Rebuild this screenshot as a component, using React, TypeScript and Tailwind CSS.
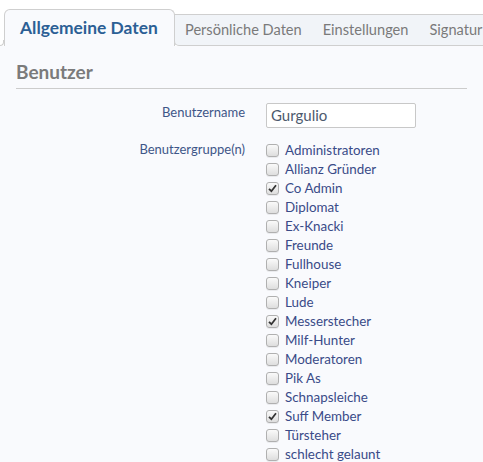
import React from "react";

const groups: { name: string; checked: boolean }[] = [
  { name: "Administratoren", checked: false },
  { name: "Allianz Gründer", checked: false },
  { name: "Co Admin", checked: true },
  { name: "Diplomat", checked: false },
  { name: "Ex-Knacki", checked: false },
  { name: "Freunde", checked: false },
  { name: "Fullhouse", checked: false },
  { name: "Kneiper", checked: false },
  { name: "Lude", checked: false },
  { name: "Messerstecher", checked: true },
  { name: "Milf-Hunter", checked: false },
  { name: "Moderatoren", checked: false },
  { name: "Pik As", checked: false },
  { name: "Schnapsleiche", checked: false },
  { name: "Suff Member", checked: true },
  { name: "Türsteher", checked: false },
  { name: "schlecht gelaunt", checked: false },
];

function Box({ checked }: { checked: boolean }) {
  return (
    <span className="flex h-[13px] w-[13px] items-center justify-center rounded-[3px] border border-[#b0b0b0] bg-gradient-to-b from-[#fafafa] to-[#dedede] shadow-[0_1px_0_rgba(0,0,0,0.06)]">
      {checked && (
        <svg width="9" height="9" viewBox="0 0 9 9">
          <path d="M1 4.8 L3.4 7.2 L8 1.2" fill="none" stroke="#333" strokeWidth="1.8" />
        </svg>
      )}
    </span>
  );
}

export default function App() {
  return (
    <div
      className="h-[462px] w-full overflow-hidden bg-[#f9fafd]"
      style={{ fontFamily: "Lato, 'Open Sans', sans-serif" }}
    >
      {/* tab strip */}
      <div className="flex items-end bg-white pt-[9px]">
        <div className="h-[6px] w-[4px] rounded-br-[5px] border-b border-r border-[#cfcfcf] bg-white" />
        <div className="flex h-[37px] w-[171px] items-center rounded-t-[6px] border-x border-t border-[#cfcfcf] bg-[#f9fafd] pl-[15px]">
          <span className="text-[17.4px] font-bold text-[#2c5f95]">Allgemeine Daten</span>
        </div>
        <div className="-ml-px flex h-[32px] flex-1 items-center gap-[21px] rounded-bl-[5px] border-y border-l border-[#cfcfcf] bg-[#f1f4f8] pl-[10px] text-[14.6px] text-[#7a7a7a] whitespace-nowrap">
          <span>Persönliche Daten</span>
          <span>Einstellungen</span>
          <span>Signatur</span>
        </div>
      </div>

      {/* section */}
      <div className="px-[16px]">
        <div className="border-b border-[#cccccc] pb-[4px] pt-[14px]">
          <h2 className="text-[19px] font-bold leading-[24px] text-[#7b7b7b]">Benutzer</h2>
        </div>

        <div className="mt-[14px] grid grid-cols-[229px_1fr] gap-x-[21px] text-[13px]">
          <div className="pt-[1px] text-right leading-[16px] text-[#3e5688]">Benutzername</div>
          <div>
            <div className="flex h-[25px] w-[150px] items-center rounded-[2px] border border-[#c8c8c8] bg-white pl-[4px] text-[15px] text-[#4d5a6e]">
              Gurgulio
            </div>
          </div>

          <div className="mt-[13px] text-right leading-[16px] text-[#3e5688]">Benutzergruppe(n)</div>
          <div className="mt-[13px] flex flex-col text-[13.4px]">
            {groups.map((g) => (
              <label key={g.name} className="flex h-[19px] items-center gap-[6px] text-[#3a4b88]">
                <Box checked={g.checked} />
                <span className="whitespace-nowrap">{g.name}</span>
              </label>
            ))}
          </div>
        </div>
      </div>
    </div>
  );
}
